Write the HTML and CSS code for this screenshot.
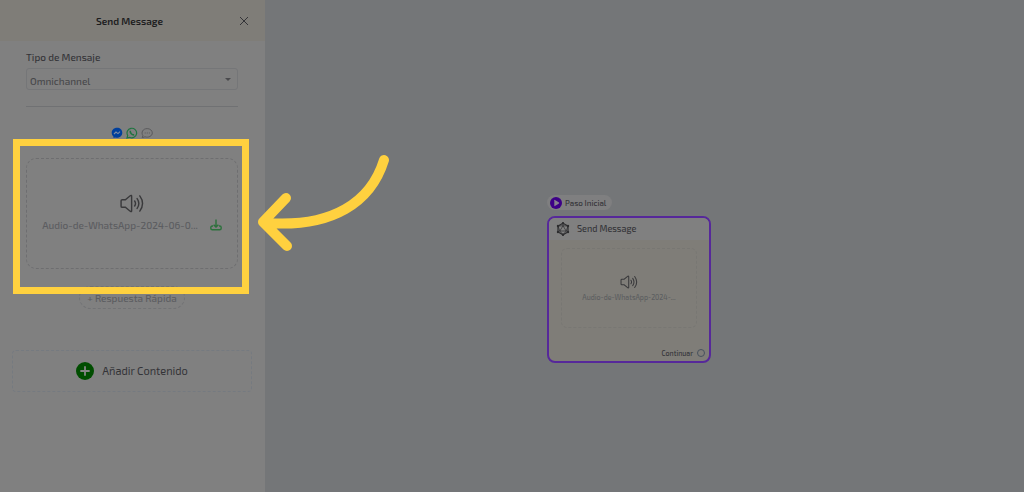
FILE: index.html
```html
<!DOCTYPE html>
<html lang="es">
<head>
    <meta charset="UTF-8">
    <meta name="viewport" content="width=device-width, initial-scale=1.0">
    <title>Send Message</title>
    <link rel="stylesheet" href="styles.css">
</head>
<body>
    <svg class="sprite" aria-hidden="true">
        <symbol id="speaker" viewBox="0 0 26 20">
            <path d="M1.5 7.2Q1.5 6 2.7 6H6L11.4 1.6Q12.6 1 12.6 2.4V17.6Q12.6 19 11.4 18.4L6 14H2.7Q1.5 14 1.5 12.8Z" />
            <path d="M15.8 7.4Q17.6 10 15.8 12.6M18.4 4.8Q22 10 18.4 15.2M21.2 2Q27 10 21.2 18" />
        </symbol>
    </svg>

    <div class="app">
        <aside class="sidebar">
            <header class="sidebar-header">
                <h1>Send Message</h1>
                <button class="close-btn" aria-label="Cerrar">
                    <svg viewBox="0 0 10 10"><path d="M1 1L9 9M9 1L1 9" /></svg>
                </button>
            </header>

            <div class="sidebar-body">
                <label for="message-type">Tipo de Mensaje</label>
                <div class="select-wrap">
                    <select id="message-type">
                        <option>Omnichannel</option>
                    </select>
                </div>
                <hr>

                <div class="channels">
                    <svg viewBox="0 0 12 12">
                        <path fill="#003f9c" d="M6 .8C2.9.8.7 3 .7 5.8c0 1.5.6 2.8 1.7 3.7l.1 1.5 1.6-.6c.6.2 1.2.3 1.9.3 3.1 0 5.3-2.200 5.300-5S9.100.8 6 .8z" />
                        <path fill="none" stroke="#7c8ba5" stroke-width="1.1" d="M3 7L5 5L7 6.6L9 4.700" />
                    </svg>
                    <svg viewBox="0 0 12 12" fill="none" stroke="#1f7440" stroke-width="1.2">
                        <path d="M1 11L1.7 8.5A4.8 4.8 0 1 1 3.6 10.3Z" />
                        <path stroke-width="1.6" d="M4.2 3.8C4 6 6 8.2 8.2 7.8" />
                    </svg>
                    <svg viewBox="0 0 12 12" fill="none" stroke="#5a5a5c">
                        <path d="M1.2 10.6L1.9 8.6C-.2 5.5 1.8 1.6 6.2 1.6C9 1.6 11.3 3.5 11.3 5.9C11.3 9 7.5 11 4 9.8Z" />
                        <path d="M3.7 6h1M5.8 6h1M7.9 6h1" />
                    </svg>
                </div>

                <div class="audio-card">
                    <svg class="speaker"><use href="#speaker" /></svg>
                    <div class="audio-file">
                        <span>Audio-de-WhatsApp-2024-06-0...</span>
                        <a href="#" aria-label="Descargar">
                            <svg viewBox="0 0 12 12"><path d="M6 .6V8M3.6 5.7L6 8L8.4 5.7M3 7H2.3Q.8 7 .8 8.500V9.300Q.8 10.800 2.300 10.800H9.700Q11.200 10.800 11.200 9.300V8.500Q11.200 7 9.700 7H9" /></svg>
                        </a>
                    </div>
                    <div class="highlight"></div>
                </div>

                <button class="quick-reply">+ Respuesta Rápida</button>
            </div>

            <button class="add-content">
                <svg viewBox="0 0 18 18">
                    <circle cx="9" cy="9" r="9" fill="#004d00" />
                    <path stroke="#858585" stroke-width="1.8" stroke-linecap="round" d="M9 5V13M5 9H13" />
                </svg>
                Añadir Contenido
            </button>
        </aside>

        <main class="canvas">
            <!-- Arrow pointing to the audio block -->
            <svg class="arrow" viewBox="0 0 134 98">
                <path d="M126 7C113 49 75 75 8 70M28 45L5 69L29 93" />
            </svg>

            <section class="node">
                <div class="start-tag">
                    <svg viewBox="0 0 12 12">
                        <circle cx="6" cy="6" r="6" fill="#3d0087" />
                        <path fill="#85808c" d="M4.3 3.2Q4.3 2.6 4.9 2.9L9 5.6Q9.4 6 9 6.4L4.9 9.1Q4.3 9.4 4.3 8.8Z" />
                    </svg>
                    Paso Inicial
                </div>
                <div class="node-card">
                    <h2>
                        <svg viewBox="0 0 14 14">
                            <path d="M7 1.2L12 4V10L7 12.8L2 10V4Z" />
                            <path class="inner" d="M7 1.2V3.8M7 3.8L3.8 9H10.2ZM2 4L7 3.8L12 4M2 4L3.8 9L2 10M12 4L10.2 9L12 10M3.8 9L7 12.8L10.2 9" />
                            <path class="dots" d="M7 1.2h0M12 4h0M12 10h0M7 12.8h0M2 10h0M2 4h0" />
                        </svg>
                        Send Message
                    </h2>
                    <div class="node-body">
                        <div class="node-audio">
                            <svg class="speaker"><use href="#speaker" /></svg>
                            <span>Audio-de-WhatsApp-2024-...</span>
                        </div>
                        <div class="node-next">Continuar <i class="port"></i></div>
                    </div>
                </div>
            </section>
        </main>
    </div>
</body>
</html>
```

FILE: styles.css
```css
:root {
    --panel: #808080;
    --cream: #7f7d78;
    --canvas: #747678;
    --text: #343438;
    --muted: #5c5d60;
    --line: #757678;
    --purple: #56289a;
    --yellow: #ffd13f;
}

* {
    margin: 0;
    padding: 0;
    box-sizing: border-box;
}

body {
    font-family: 'Exo 2', 'Open Sans', sans-serif;
    font-size: 11px;
    line-height: 16px;
    color: var(--text);
    background-color: var(--canvas);
}

button,
select {
    font: inherit;
    color: inherit;
    background: none;
    border: none;
}

svg {
    display: block;
    flex: none;
}

.sprite {
    position: absolute;
    width: 0;
    height: 0;
}

.app {
    display: flex;
    min-height: 100vh;
}

/* Sidebar */
.sidebar {
    width: 265px;
    flex: none;
    background-color: var(--panel);
}

.sidebar-header {
    display: grid;
    grid-template-columns: 1fr auto 1fr;
    align-items: center;
    height: 41px;
    padding: 0 16px 0 10px;
    background-color: var(--cream);
}

.sidebar-header h1 {
    grid-column: 2;
    font-size: 10px;
    font-weight: 600;
    color: #1c1c1e;
}

.close-btn {
    justify-self: end;
    padding: 0;
}

.close-btn svg {
    width: 10px;
    height: 10px;
    fill: none;
    stroke: var(--text);
}

.sidebar-body {
    display: flex;
    flex-direction: column;
    padding: 8px 27px 0 26px;
}

.sidebar-body label {
    font-size: 10px;
    font-weight: 500;
}

.select-wrap {
    position: relative;
    margin-top: 3px;
}

.select-wrap select {
    display: block;
    appearance: none;
    width: 100%;
    height: 22px;
    padding: 3px 3px 0;
    font-size: 10px;
    font-weight: 500;
    color: #48484b;
    border: 1px solid var(--line);
    border-radius: 3px;
}

.select-wrap::after {
    content: '';
    position: absolute;
    right: 7px;
    top: 10px;
    border: 3px solid transparent;
    border-top-color: #4a4a4d;
    border-bottom: 0;
}

hr {
    margin-top: 16px;
    border: 0;
    border-top: 1px solid #707173;
}

.channels {
    display: flex;
    justify-content: center;
    gap: 3px;
    margin-top: 20px;
}

.channels svg {
    width: 12px;
    height: 12px;
}

.audio-card {
    position: relative;
    display: flex;
    flex-direction: column;
    align-items: center;
    height: 111px;
    margin-top: 19px;
    padding-top: 35px;
    border: 1px dashed #6e6e70;
    border-radius: 10px;
}

.speaker {
    fill: none;
    stroke: #39393b;
    stroke-width: 1.5;
    stroke-linecap: round;
    width: 26px;
    height: 19px;
}

.audio-file {
    display: flex;
    align-items: center;
    gap: 12px;
    margin-top: 4px;
    font-size: 10px;
    font-weight: 500;
    color: var(--muted);
    white-space: nowrap;
}

.audio-file svg {
    width: 12px;
    height: 12px;
    fill: none;
    stroke: #2c713c;
    stroke-width: 1.4;
}

.highlight {
    position: absolute;
    inset: -20px -12px -26px -14px;
    border: 7px solid var(--yellow);
    pointer-events: none;
}

.quick-reply {
    align-self: center;
    height: 23px;
    margin-top: 17px;
    padding: 0 7px;
    font-size: 10px;
    font-weight: 500;
    color: var(--muted);
    border: 1px dashed #727375;
    border-radius: 12px;
}

.add-content {
    display: flex;
    align-items: center;
    justify-content: center;
    gap: 8px;
    width: calc(100% - 25px);
    height: 42px;
    margin: 41px 13px 0 12px;
    border: 1px dashed #757a80;
    border-radius: 4px;
}

.add-content svg {
    width: 18px;
    height: 18px;
}

/* Flow canvas */
.canvas {
    position: relative;
    flex: 1;
}

.arrow {
    position: absolute;
    left: -7px;
    top: 153px;
    width: 134px;
    height: 98px;
    fill: none;
    stroke: var(--yellow);
    stroke-width: 10;
    stroke-linecap: round;
    stroke-linejoin: round;
}

.node {
    position: absolute;
    left: 282px;
    top: 195px;
    width: 164px;
}

.start-tag {
    display: flex;
    align-items: center;
    gap: 3px;
    width: 65px;
    height: 15px;
    padding-left: 3px;
    font-size: 8px;
    font-weight: 500;
    white-space: nowrap;
    background-color: #7f7f80;
    border-radius: 8px;
}

.start-tag svg {
    width: 12px;
    height: 12px;
}

.node-card {
    margin-top: 6px;
    overflow: hidden;
    background-color: var(--cream);
    border: 2px solid var(--purple);
    border-radius: 8px;
}

.node-card h2 {
    display: flex;
    align-items: center;
    gap: 7px;
    height: 22px;
    padding-left: 7px;
    font-size: 9px;
    font-weight: 500;
    background-color: var(--panel);
}

.node-card h2 svg {
    width: 14px;
    height: 14px;
    fill: none;
    stroke: #2d2d2f;
    stroke-width: 1.2;
}

.node-card h2 .inner {
    stroke-width: 0.7;
}

.node-card h2 .dots {
    stroke-width: 2.4;
    stroke-linecap: round;
}

.node-body {
    padding: 8px 12px 0;
}

.node-audio {
    display: flex;
    flex-direction: column;
    align-items: center;
    height: 80px;
    padding-top: 26px;
    font-size: 7px;
    font-weight: 500;
    color: var(--muted);
    border: 1px dashed #787773;
    border-radius: 6px;
}

.node-audio .speaker {
    width: 18px;
    height: 14px;
}

.node-next {
    display: flex;
    align-items: center;
    justify-content: flex-end;
    gap: 4px;
    height: 33px;
    margin-right: -8px;
    padding-top: 16px;
    font-size: 7px;
    font-weight: 500;
}

.port {
    width: 8px;
    height: 8px;
    border: 1px solid #47525e;
    border-radius: 50%;
}
```
